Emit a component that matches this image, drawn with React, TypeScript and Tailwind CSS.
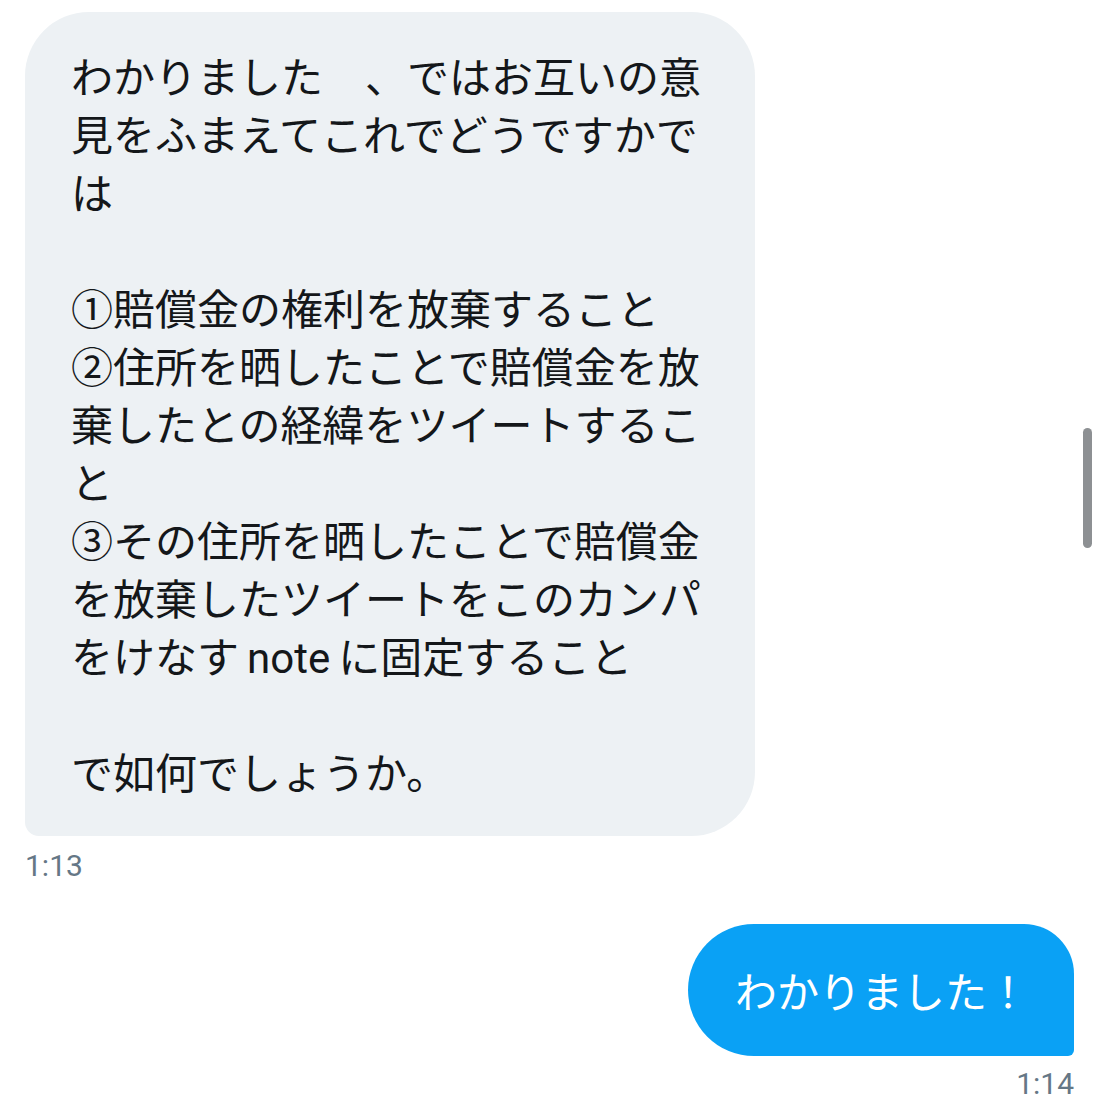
import React from 'react';

const receivedLines: React.ReactNode[] = [
  'わかりました　、ではお互いの意',
  '見をふまえてこれでどうですかで',
  'は',
  '',
  '①賠償金の権利を放棄すること',
  '②住所を晒したことで賠償金を放',
  '棄したとの経緯をツイートするこ',
  'と',
  '③その住所を晒したことで賠償金',
  'を放棄したツイートをこのカンパ',
  <>をけなす<span className="px-[8px]" style={{ fontFamily: 'Roboto, sans-serif' }}>note</span>に固定すること</>,
  '',
  'で如何でしょうか。',
];

const font = { fontFamily: '"Noto Sans CJK JP", "Noto Sans", sans-serif' };
const timeFont = { fontFamily: 'Roboto, "Liberation Sans", sans-serif' };

export default function App() {
  return (
    <div className="relative w-[1100px] h-[1100px] bg-white overflow-hidden" style={font}>
      <div className="flex flex-col pt-3 pl-[25px] pr-[26px]">
        {/* received */}
        <div className="w-[730px] bg-[#edf1f4] rounded-[64px] rounded-bl-[14px] pl-[46px] pr-[20px] pt-[34px] pb-[36px] text-[#14171a] text-[42px] leading-[58px]">
          {receivedLines.map((line, i) => (
            <div key={i} className="whitespace-pre h-[58px]">{line}</div>
          ))}
        </div>
        <div className="mt-[14px] text-[30px] leading-[32px] text-[#657786]" style={timeFont}>1:13</div>

        {/* sent */}
        <div className="self-end mt-[42px] w-[386px] h-[132px] bg-[#0aa1f5] rounded-l-[66px] rounded-tr-[50px] rounded-br-[6px] pl-[47px] flex items-center text-white text-[42px] leading-[58px]">
          わかりました！
        </div>
        <div className="self-end mt-[12px] text-[30px] leading-[32px] text-[#657786]" style={timeFont}>1:14</div>
      </div>

      {/* scrollbar */}
      <div className="absolute left-[1083px] top-[428px] w-[9px] h-[120px] rounded-full bg-[#8d9093]" />
    </div>
  );
}
